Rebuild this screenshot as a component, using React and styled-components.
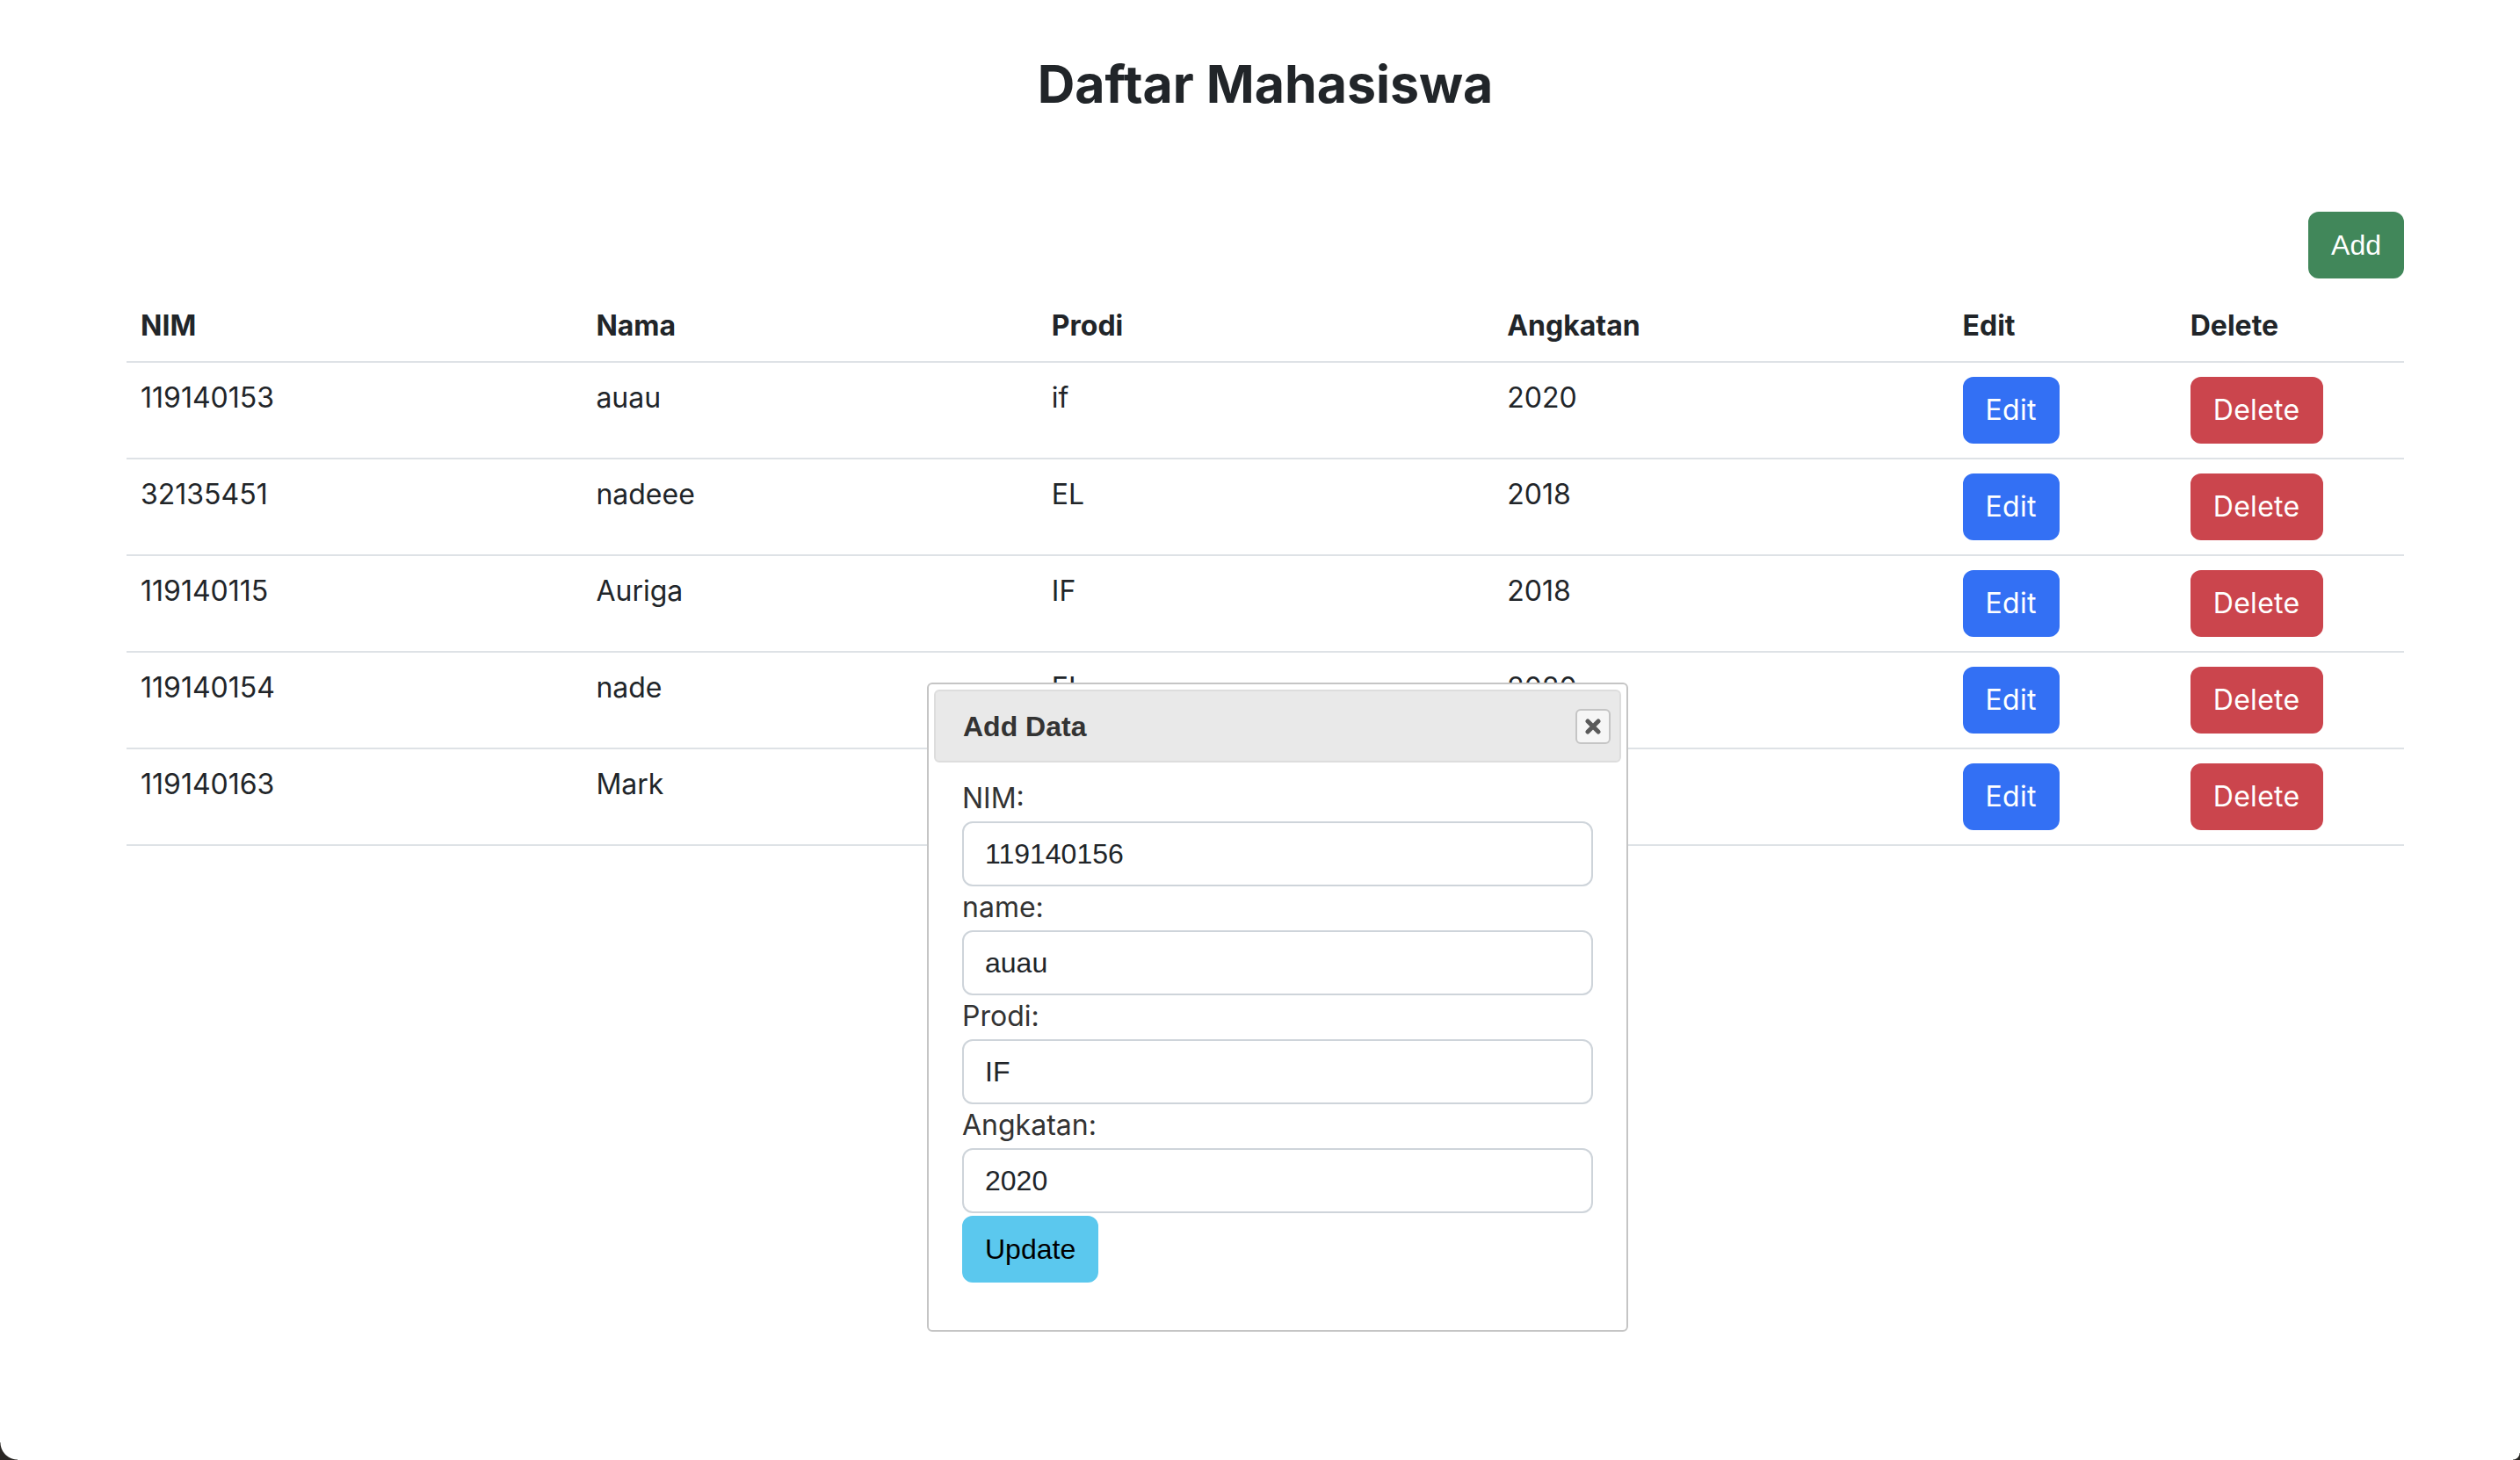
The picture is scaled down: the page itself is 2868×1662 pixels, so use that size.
import React from "react";
import styled, { createGlobalStyle } from "styled-components";

const GlobalStyle = createGlobalStyle`
  html, body { margin: 0; padding: 0; background: #fff; }
  body {
    font-family: Inter, "Noto Sans", sans-serif;
    color: #212529;
    font-size: 32px;
    line-height: 1.5;
  }
  * { box-sizing: border-box; }
`;

const Page = styled.div`
  position: relative;
  min-height: 100vh;
  padding: 60px 132px 0 144px;
`;

const Heading = styled.h2`
  margin: 0;
  text-align: center;
  font-family: Inter, sans-serif;
  font-size: 59px;
  font-weight: 700;
  line-height: 72px;
  color: #212529;
`;

const Toolbar = styled.div`
  display: flex;
  justify-content: flex-end;
  margin-top: 109px;
  margin-bottom: 14px;
`;

const Button = styled.button`
  display: inline-block;
  vertical-align: top;
  font-family: ${(p) =>
    p.$arial ? '"Liberation Sans", Arial, sans-serif' : "Inter, sans-serif"};
  font-size: 32px;
  font-weight: 400;
  line-height: 48px;
  padding: 12px 24px;
  border: 2px solid ${(p) => p.$bg};
  background: ${(p) => p.$bg};
  color: ${(p) => p.$fg || "#fff"};
  border-radius: 12px;
  letter-spacing: ${(p) => (p.$arial ? "0" : "0.3px")};
  cursor: pointer;
`;

const Table = styled.table`
  width: 100%;
  border-collapse: collapse;
  table-layout: fixed;
`;

const Th = styled.th`
  text-align: left;
  font-weight: 700;
  padding: 16px;
  line-height: 48px;
  border-bottom: 2px solid #dee2e6;
  vertical-align: top;
  color: #212529;
`;

const Td = styled.td`
  padding: 16px;
  line-height: 48px;
  border-bottom: 2px solid #dee2e6;
  vertical-align: top;
  font-weight: 400;
  color: #212529;
`;

const Dialog = styled.div`
  position: absolute;
  left: 1055px;
  top: 777px;
  width: 798px;
  background: #fff;
  border: 2px solid #c5c5c5;
  border-radius: 6px;
  padding: 6px;
`;

const TitleBar = styled.div`
  display: flex;
  align-items: center;
  justify-content: space-between;
  height: 83px;
  padding: 0 10px 0 31px;
  background: #e9e9e9;
  border: 2px solid #dddddd;
  border-radius: 6px;
`;

const DialogTitle = styled.span`
  font-family: "Liberation Sans", Arial, sans-serif;
  font-weight: 700;
  font-size: 32px;
  color: #333;
`;

const CloseButton = styled.button`
  display: flex;
  align-items: center;
  justify-content: center;
  width: 40px;
  height: 40px;
  padding: 0;
  background: #f6f6f6;
  border: 2px solid #c5c5c5;
  border-radius: 6px;
`;

const DialogBody = styled.div`
  padding: 17px 32px 48px;
`;

const Label = styled.label`
  display: block;
  font-family: Inter, sans-serif;
  font-size: 32px;
  line-height: 48px;
  margin-bottom: 2px;
  color: #333;
`;

const Input = styled.input`
  display: block;
  width: 100%;
  height: 74px;
  padding: 11px 24px;
  font-family: "Liberation Sans", Arial, sans-serif;
  font-size: 32px;
  line-height: 48px;
  color: #212529;
  background: #fff;
  border: 2px solid #ced4da;
  border-radius: 12px;
  outline: none;
`;

const SubmitRow = styled.div`
  margin-top: 3px;
`;

const Corner = styled.div`
  position: fixed;
  bottom: 0;
  ${(p) => p.$side}: 0;
  width: ${(p) => p.$r}px;
  height: ${(p) => p.$r}px;
  background: radial-gradient(
    circle at ${(p) => (p.$side === "left" ? "100% 0" : "0 0")},
    transparent ${(p) => p.$r - 1}px,
    #2a2724 ${(p) => p.$r}px
  );
  pointer-events: none;
`;

const rows = [
  ["119140153", "auau", "if", "2020"],
  ["32135451", "nadeee", "EL", "2018"],
  ["119140115", "Auriga", "IF", "2018"],
  ["119140154", "nade", "EL", "2020"],
  ["119140163", "Mark", "IF", "2021"],
];

const fields = [
  ["NIM:", "119140156"],
  ["name:", "auau"],
  ["Prodi:", "IF"],
  ["Angkatan:", "2020"],
];

const CloseIcon = () => (
  <svg width="18" height="18" viewBox="0 0 18 18">
    <path
      d="M3 3 L15 15 M15 3 L3 15"
      stroke="#5a5a5a"
      strokeWidth="5"
      strokeLinecap="round"
      fill="none"
    />
  </svg>
);

export default function App() {
  return (
    <>
      <GlobalStyle />
      <Page>
        <Heading>Daftar Mahasiswa</Heading>
        <Toolbar>
          <Button $arial $bg="#41875a">Add</Button>
        </Toolbar>
        <Table>
          <colgroup>
            <col style={{ width: "20%" }} />
            <col style={{ width: "20%" }} />
            <col style={{ width: "20%" }} />
            <col style={{ width: "20%" }} />
            <col style={{ width: "10%" }} />
            <col style={{ width: "10%" }} />
          </colgroup>
          <thead>
            <tr>
              <Th>NIM</Th>
              <Th>Nama</Th>
              <Th>Prodi</Th>
              <Th>Angkatan</Th>
              <Th>Edit</Th>
              <Th>Delete</Th>
            </tr>
          </thead>
          <tbody>
            {rows.map((r) => (
              <tr key={r[0]}>
                <Td>{r[0]}</Td>
                <Td>{r[1]}</Td>
                <Td>{r[2]}</Td>
                <Td>{r[3]}</Td>
                <Td>
                  <Button $bg="#3370f4">Edit</Button>
                </Td>
                <Td>
                  <Button $bg="#cb454d">Delete</Button>
                </Td>
              </tr>
            ))}
          </tbody>
        </Table>

        <Dialog>
          <TitleBar>
            <DialogTitle>Add Data</DialogTitle>
            <CloseButton aria-label="close">
              <CloseIcon />
            </CloseButton>
          </TitleBar>
          <DialogBody>
            {fields.map(([label, value]) => (
              <div key={label}>
                <Label>{label}</Label>
                <Input value={value} readOnly />
              </div>
            ))}
            <SubmitRow>
              <Button $arial $bg="#5bc8ee" $fg="#000">
                Update
              </Button>
            </SubmitRow>
          </DialogBody>
        </Dialog>
        <Corner $side="left" $r={20} />
        <Corner $side="right" $r={8} />
      </Page>
    </>
  );
}
